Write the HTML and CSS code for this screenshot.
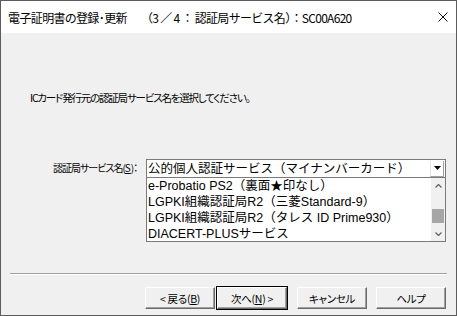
FILE: index.html
```html
<!DOCTYPE html>
<html lang="ja">
<head>
    <meta charset="UTF-8">
    <title>電子証明書の登録・更新</title>
    <link rel="stylesheet" href="styles.css">
</head>
<body>
    <div class="window">
        <div class="titlebar">
            <span class="title-main">電子証明書の登録･更新</span>
            <span class="title-step">（3 ／ 4 ： 認証局サービス名）：SC00A620</span>
            <span class="close-btn">
                <svg viewBox="0 0 10 10" width="10" height="10">
                    <path d="M0.5 0.5L9.5 9.5M9.5 0.5L0.5 9.5"></path>
                </svg>
            </span>
        </div>
        <div class="client">
            <p class="instruction">ICカード発行元の認証局サービス名を選択してください。</p>

            <div class="field-row">
                <label class="field-label">認証局サービス名(<u>S</u>)：</label>
                <div class="combo-wrap">
                    <div class="combo">
                        <span class="combo-value">公的個人認証サービス（マイナンバーカード）</span>
                        <span class="combo-button">
                            <svg viewBox="0 0 7 4" width="7" height="4">
                                <path d="M0 0H7L3.5 4Z"></path>
                            </svg>
                        </span>
                    </div>
                    <div class="list">
                        <ul class="list-items">
                            <li>e-Probatio PS2（裏面★印なし）</li>
                            <li>LGPKI組織認証局R2（三菱Standard-9）</li>
                            <li>LGPKI組織認証局R2（タレス ID Prime930）</li>
                            <li>DIACERT-PLUSサービス</li>
                        </ul>
                        <div class="scrollbar">
                            <svg class="arrow" viewBox="0 0 7 4" width="7" height="4">
                                <path d="M0.5 3.5L3.5 0.5L6.5 3.5"></path>
                            </svg>
                            <div class="track">
                                <div class="thumb"></div>
                            </div>
                            <svg class="arrow" viewBox="0 0 7 4" width="7" height="4">
                                <path d="M0.5 0.5L3.5 3.5L6.5 0.5"></path>
                            </svg>
                        </div>
                    </div>
                </div>
            </div>

            <div class="separator"></div>

            <div class="buttons">
                <button class="btn">&lt; 戻る(<u>B</u>)</button>
                <button class="btn btn-default">次へ(<u>N</u>) &gt;</button>
                <button class="btn btn-gap">キャンセル</button>
                <button class="btn btn-gap-small">ヘルプ</button>
            </div>
        </div>
    </div>
</body>
</html>
```

FILE: styles.css
```css
* {
    margin: 0;
    padding: 0;
    box-sizing: border-box;
}

body {
    background: #f0f0f0;
    font-family: "Noto Sans CJK JP", "Noto Sans", sans-serif;
    color: #000;
}

.window {
    width: 457px;
    height: 316px;
    border: 1px solid #5c5c5c;
    display: flex;
    flex-direction: column;
    background: #f0f0f0;
}

/* title bar */
.titlebar {
    height: 32px;
    background: #fff;
    display: flex;
    align-items: center;
    padding-left: 7px;
    font-size: 12px;
    white-space: nowrap;
}

.title-main {
    font-feature-settings: "palt";
    letter-spacing: -0.6px;
}

.title-step {
    margin-left: 14px;
    letter-spacing: -0.7px;
}

.close-btn {
    margin-left: auto;
    margin-right: 8px;
    display: flex;
}

.close-btn svg {
    stroke: #111;
    stroke-width: 1;
    fill: none;
}

/* client area */
.client {
    flex: 1;
    display: flex;
    flex-direction: column;
}

.instruction {
    margin: 57px 0 0 29px;
    font-size: 10.5px;
    line-height: 16px;
    font-feature-settings: "palt";
    letter-spacing: -1.2px;
}

.field-row {
    display: flex;
    align-items: flex-start;
    margin: 53px 0 0 52px;
}

.field-label {
    width: 93px;
    height: 18px;
    line-height: 18px;
    font-size: 10px;
    font-feature-settings: "palt";
    letter-spacing: -1px;
    white-space: nowrap;
}

.field-label u {
    letter-spacing: 0;
}

.combo-wrap {
    width: 300px;
    display: flex;
    flex-direction: column;
}

.combo {
    height: 18px;
    background: #fff;
    border: 1px solid #7a7a7a;
    border-bottom: none;
    display: flex;
    align-items: center;
}

.combo-value,
.list-items li {
    font-family: "Liberation Sans", "Noto Sans CJK JP", sans-serif;
    font-size: 12.5px;
    line-height: 16px;
    height: 16px;
    white-space: nowrap;
    padding-left: 1px;
}

.combo-value {
    flex: 1;
}

.combo-button {
    width: 14px;
    height: 16px;
    margin-right: 1px;
    border-left: 1px solid #e3e3e3;
    border-bottom: 1px solid #a0a0a0;
    border-right: 1px solid #a0a0a0;
    display: flex;
    align-items: center;
    justify-content: center;
}

.combo-button svg {
    fill: #000;
}

.list {
    height: 65px;
    background: #fff;
    border: 1px solid #7a7a7a;
    display: flex;
}

.list-items {
    flex: 1;
    list-style: none;
}

.scrollbar {
    width: 14px;
    background: #f0f0f0;
    display: flex;
    flex-direction: column;
    align-items: center;
    padding: 6px 0 5px;
}

.scrollbar .arrow {
    stroke: #606060;
    stroke-width: 1.2;
    fill: none;
}

.track {
    flex: 1;
    width: 100%;
    display: flex;
    flex-direction: column;
    justify-content: flex-end;
    padding: 0 0 9px 1px;
}

.thumb {
    height: 14px;
    width: 12px;
    background: #a6a6a6;
}

/* etched separator */
.separator {
    margin: 31px 9px 0 9px;
    border-top: 1px solid #a0a0a0;
    border-bottom: 1px solid #fff;
}

/* wizard buttons */
.buttons {
    display: flex;
    margin: 12px 0 0 144px;
}

.btn {
    width: 70px;
    height: 22px;
    font-family: "Noto Sans CJK JP", "Noto Sans", sans-serif;
    font-size: 10.5px;
    font-feature-settings: "palt";
    letter-spacing: -0.3px;
    background: #f0f0f0;
    border: 1px solid;
    border-color: #fff #696969 #696969 #fff;
    box-shadow: inset -1px -1px 0 #a0a0a0;
    color: #000;
}

.btn + .btn {
    margin-left: 2px;
}

.btn-default {
    outline: 1px solid #000;
}

.btn.btn-gap {
    margin-left: 10px;
}

.btn.btn-gap-small {
    margin-left: 9px;
}
```
